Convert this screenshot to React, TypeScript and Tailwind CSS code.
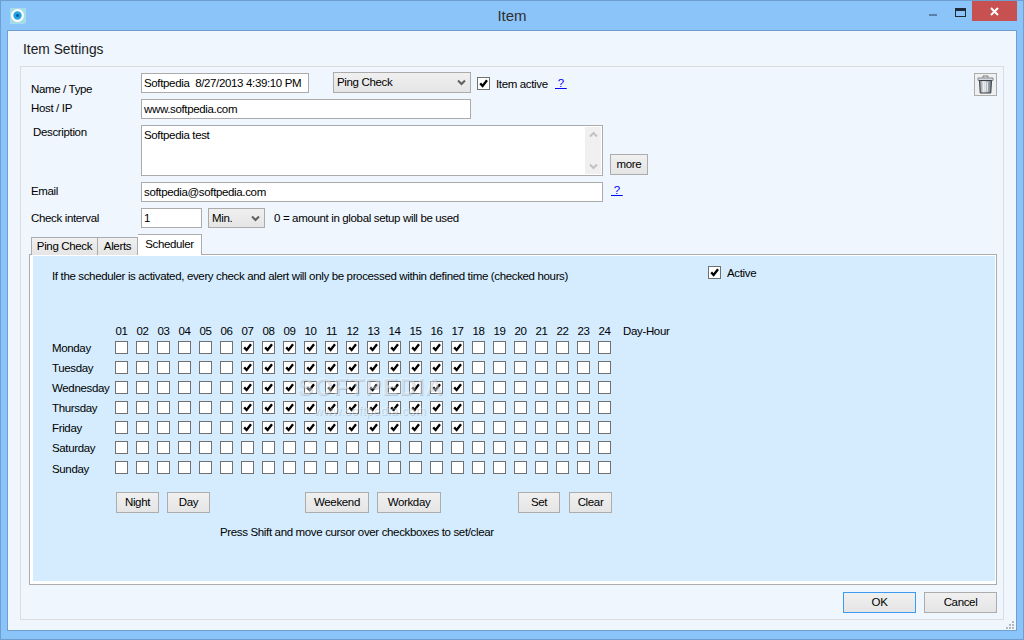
const hours = Array.from({ length: 24 }, (_, i) => String(i + 1).padStart(2, '0'))
const days = ['Monday', 'Tuesday', 'Wednesday', 'Thursday', 'Friday', 'Saturday', 'Sunday']
const workdays = ['Monday', 'Tuesday', 'Wednesday', 'Thursday', 'Friday']

function CheckBox({ checked, className = '' }: { checked?: boolean; className?: string }) {
  return (
    <div className={`flex h-[13px] w-[13px] shrink-0 items-center justify-center border border-[#707070] bg-white ${className}`}>
      {checked && (
        <svg width="11" height="11" viewBox="0 0 11 11">
          <path d="M2.2 5.4 L4.6 8 L9 2.2" fill="none" stroke="#000" strokeWidth="2.3" />
        </svg>
      )}
    </div>
  )
}

function Btn({ label, className }: { label: string; className: string }) {
  return (
    <div className={`flex h-[21px] shrink-0 items-center justify-center border border-[#acacac] bg-gradient-to-b from-[#f0f0f0] to-[#e5e5e5] pt-[1px] text-black ${className}`}>
      {label}
    </div>
  )
}

function Chevron({ up, color = '#606060' }: { up?: boolean; color?: string }) {
  return (
    <svg width="9" height="7" viewBox="0 0 9 7" className="shrink-0">
      <path d={up ? 'M1 5.5 L4.5 2 L8 5.5' : 'M1 1.5 L4.5 5 L8 1.5'} fill="none" stroke={color} strokeWidth="2" />
    </svg>
  )
}

function Field({ value, className }: { value: string; className: string }) {
  return (
    <div className={`flex h-[20px] shrink-0 items-center whitespace-pre border border-[#ababab] bg-white pl-[2px] pt-[1px] ${className}`}>
      {value}
    </div>
  )
}

function Select({ value, className }: { value: string; className: string }) {
  return (
    <div className={`flex shrink-0 items-center justify-between border border-[#ababab] bg-gradient-to-b from-[#f0f0f0] to-[#e5e5e5] pl-[3px] pr-[4px] ${className}`}>
      <span className="pt-[1px]">{value}</span>
      <Chevron />
    </div>
  )
}

function Label({ text, className }: { text: string; className: string }) {
  return <div className={`h-[16px] w-[112px] shrink-0 leading-[16px] ${className}`}>{text}</div>
}

function Help({ className = '' }: { className?: string }) {
  return <span className={`whitespace-pre leading-[16px] text-[#0000ff] underline ${className}`}> ? </span>
}

function TrashIcon() {
  return (
    <svg width="17" height="19" viewBox="0 0 17 19">
      <defs>
        <linearGradient id="trashBody" x1="0" y1="0" x2="1" y2="0">
          <stop offset="0" stopColor="#7f8790" />
          <stop offset="0.35" stopColor="#e6e9ec" />
          <stop offset="0.65" stopColor="#a8b0b8" />
          <stop offset="1" stopColor="#6f7880" />
        </linearGradient>
      </defs>
      <path d="M6 2.5 V1 H11 V2.5" fill="none" stroke="#707880" strokeWidth="1" />
      <path d="M1 3 H16 V5.5 H1 Z" fill="#d8dce0" stroke="#808890" strokeWidth="1" />
      <path d="M2.5 5.5 H14.5 L13.8 18 H3.2 Z" fill="url(#trashBody)" stroke="#3a4048" strokeWidth="1" />
      <path d="M6.5 7 V16.5 M8.5 7 V16.5 M10.5 7 V16.5" stroke="#eef0f2" strokeWidth="0.8" />
    </svg>
  )
}

function AppIcon() {
  return (
    <svg width="16" height="16" viewBox="0 0 16 16" className="ml-[9px] mt-[7px] shrink-0">
      <path d="M0 0 H16 V13 Q16 16 13 16 H0 Z" fill="#a6dcea" />
      <circle cx="7.5" cy="7.5" r="6.5" fill="#ffffff" />
      <circle cx="7.5" cy="7.5" r="4.2" fill="#27a2e4" />
      <circle cx="7.5" cy="7.5" r="1.6" fill="#0b5f9e" />
    </svg>
  )
}

function Scheduler() {
  return (
    <div className="relative flex h-[325px] flex-col bg-[#d4ecfe] pl-[19px]">
      <div className="flex h-[39px] shrink-0 items-start">
        <span className="mt-[12px] w-[656px] shrink-0 leading-[16px]">
          If the scheduler is activated, every check and alert will only be processed within defined time (checked hours)
        </span>
        <CheckBox checked className="mt-[10px]" />
        <span className="ml-[6px] mt-[9px] leading-[16px]">Active</span>
      </div>

      <div className="mt-[29px] flex h-[16px] items-center pl-[59px]">
        {hours.map((h) => (
          <span key={h} className="w-[21px] shrink-0 text-center">{h}</span>
        ))}
        <span className="ml-[8px]">Day-Hour</span>
      </div>

      <div className="mt-[1px] flex flex-col">
        {days.map((d) => (
          <div key={d} className="flex h-[20px]">
            <span className={`w-[59px] shrink-0 leading-[14px] ${d === 'Sunday' ? 'pt-[1px]' : ''}`}>{d}</span>
            {hours.map((h, i) => (
              <div key={h} className="flex w-[21px] shrink-0 justify-center">
                <CheckBox checked={workdays.includes(d) && i >= 6 && i <= 16} />
              </div>
            ))}
          </div>
        ))}
      </div>

      <div className="mt-[11px] flex pl-[64px]">
        <Btn label="Night" className="w-[43px]" />
        <Btn label="Day" className="ml-[8px] w-[43px]" />
        <Btn label="Weekend" className="ml-[95px] w-[64px]" />
        <Btn label="Workday" className="ml-[8px] w-[64px]" />
        <Btn label="Set" className="ml-[77px] w-[42px]" />
        <Btn label="Clear" className="ml-[9px] w-[43px]" />
      </div>
      <div className="mt-[11px] pl-[168px] leading-[16px]">Press Shift and move cursor over checkboxes to set/clear</div>

      {/* watermark baked into the screenshot */}
      <div className="pointer-events-none absolute left-[262px] top-[118px] flex w-[150px] flex-col items-center text-white/40 [text-shadow:1px_1px_0_rgba(90,110,130,0.25)]">
        <span className="text-[24px] font-bold leading-[26px] tracking-[1px]">SOFTPEDIA</span>
        <span className="mt-[4px] text-[12px] leading-[14px] tracking-[0.5px]">www.softpedia.com</span>
      </div>
    </div>
  )
}

export default function App() {
  return (
    <div className="flex h-[640px] w-[1024px] flex-col overflow-hidden border border-[#6f9fd0] bg-[#8bc4f8] font-['Liberation_Sans',Arial,sans-serif] text-[11.5px] tracking-[-0.35px] text-black">
      {/* title bar */}
      <div className="grid h-[29px] shrink-0 grid-cols-[1fr_auto_1fr] items-start">
        <AppIcon />
        <div className="pt-[5px] text-[15px] leading-[20px] tracking-normal text-[#303030]">Item</div>
        <div className="flex justify-end">
          <svg width="8" height="2" viewBox="0 0 8 2" className="mt-[13px]">
            <rect width="8" height="2" fill="#5b7fa6" />
          </svg>
          <div className="ml-[18px] mt-[7px] h-[9px] w-[11px] border border-t-[3px] border-[#1e2a36]" />
          <div className="ml-[6px] flex h-[20px] w-[45px] items-center justify-center bg-[#c75050]">
            <svg width="9" height="9" viewBox="0 0 9 9">
              <path d="M1 1 L8 8 M8 1 L1 8" stroke="#fff" strokeWidth="2" />
            </svg>
          </div>
          <div className="w-[6px]" />
        </div>
      </div>

      {/* client area */}
      <div className="relative ml-[6px] flex h-[601px] w-[1010px] flex-col border border-[#6f9fd0] bg-[#eff6fe] px-[12px]">
        <div className="h-[35px] shrink-0 pl-[3px] pt-[10px] text-[13.8px] leading-[18px] tracking-normal text-[#202020]">Item Settings</div>

        <div className="flex h-[554px] shrink-0 flex-col border border-[#dcdcdc] pl-[8px] pr-[6px]">
          {/* name / type */}
          <div className="mt-[5px] flex h-[21px] shrink-0 items-start">
            <Label text="Name / Type" className="mt-[9px] pl-[2px]" />
            <Field value="Softpedia  8/27/2013 4:39:10 PM" className="mt-[1px] w-[168px]" />
            <Select value="Ping Check" className="ml-[24px] h-[21px] w-[138px]" />
            <CheckBox checked className="ml-[6px] mt-[5px] border-[#505050]" />
            <span className="ml-[6px] mt-[4px] w-[52px] leading-[16px]">Item active</span>
            <Help className="ml-[7px] mt-[3px]" />
            <div className="ml-auto mt-[1px] flex h-[23px] w-[23px] items-center justify-center border border-[#acacac] bg-[#f0f0f0]">
              <TrashIcon />
            </div>
          </div>

          {/* host */}
          <div className="mt-[6px] flex h-[20px] shrink-0">
            <Label text="Host / IP" className="mt-[1px] pl-[2px]" />
            <Field value="www.softpedia.com" className="w-[330px]" />
          </div>

          {/* description */}
          <div className="mt-[6px] flex h-[51px] shrink-0">
            <Label text="Description" className="-mt-[1px] pl-[4px]" />
            <div className="flex h-[51px] w-[462px] shrink-0 border border-[#ababab] bg-white">
              <span className="flex-1 pl-[2px] pt-[1px] leading-[16px]">Softpedia test</span>
              <div className="my-[1px] mr-[1px] flex w-[16px] flex-col items-center justify-between bg-[#f0f0f0] py-[4px]">
                <Chevron up color="#c2c2c2" />
                <Chevron color="#c2c2c2" />
              </div>
            </div>
            <Btn label="more" className="ml-[7px] mt-[29px] w-[38px]" />
          </div>

          {/* email */}
          <div className="mt-[6px] flex h-[20px] shrink-0">
            <Label text="Email" className="mt-[1px] pl-[2px]" />
            <Field value="softpedia@softpedia.com" className="w-[462px]" />
            <Help className="ml-[8px]" />
          </div>

          {/* interval */}
          <div className="mt-[6px] flex h-[20px] shrink-0">
            <Label text="Check interval" className="mt-[2px] pl-[2px]" />
            <Field value="1" className="w-[61px]" />
            <Select value="Min." className="ml-[6px] h-[20px] w-[57px]" />
            <span className="ml-[9px] mt-[2px] leading-[16px]">0 = amount in global setup will be used</span>
          </div>

          {/* tabs */}
          <div className="relative z-10 mt-[6px] -mb-[1px] flex h-[21px] shrink-0 items-end pl-[2px]">
            <div className="flex h-[18px] w-[67px] items-center justify-center border border-b-0 border-[#acacac] bg-gradient-to-b from-[#f0f0f0] to-[#e5e5e5]">Ping Check</div>
            <div className="flex h-[18px] w-[40px] items-center justify-center border border-b-0 border-l-0 border-[#acacac] bg-gradient-to-b from-[#f0f0f0] to-[#e5e5e5]">Alerts</div>
            <div className="flex h-[21px] w-[64px] items-start justify-center border border-b-0 border-l-0 border-[#acacac] bg-white pt-[2px] leading-[14px]">Scheduler</div>
          </div>
          <div className="h-[331px] shrink-0 border border-[#acacac] bg-white pb-[3px] pl-[3px] pr-[1px] pt-[1px]">
            <Scheduler />
          </div>

          {/* dialog buttons */}
          <div className="mt-[7px] flex justify-end gap-[8px]">
            <Btn label="OK" className="w-[73px] !border-[#3c9bf0]" />
            <Btn label="Cancel" className="w-[73px]" />
          </div>
        </div>

        {/* resize grip */}
        <svg width="10" height="10" viewBox="0 0 10 10" className="absolute bottom-[0px] right-[1px]">
          <path d="M7 1h2v2H7zM4 4h2v2H4zM7 4h2v2H7zM1 7h2v2H1zM4 7h2v2H4zM7 7h2v2H7z" fill="#b0b8c0" />
        </svg>
      </div>
    </div>
  )
}
